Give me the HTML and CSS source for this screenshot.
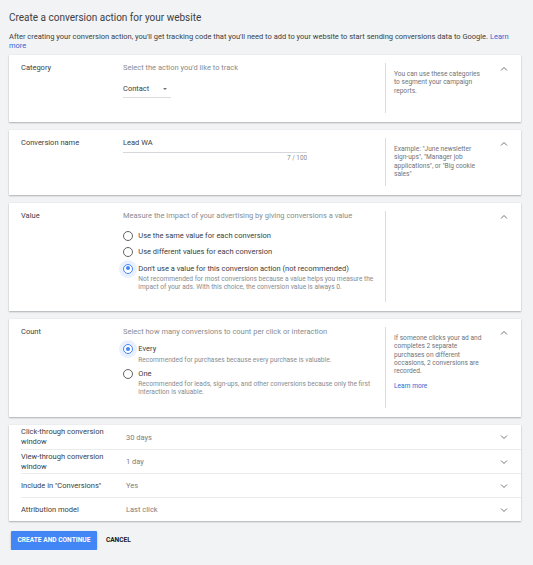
FILE: index.html
```html
<!DOCTYPE html>
<html lang="en">
<head>
    <meta charset="UTF-8">
    <meta name="viewport" content="width=device-width, initial-scale=1.0">
    <title>Create a conversion action</title>
    <link rel="stylesheet" href="styles.css">
</head>
<body>
    <div class="page">
        <h1 class="title">Create a conversion action for your website</h1>
        <p class="intro">After creating your conversion action, you'll get tracking code that you'll need to add to your website to start sending conversions data to Google. <a href="#">Learn more</a></p>

        <section class="card card-category">
            <div class="label">Category</div>
            <div class="main">
                <div class="hint">Select the action you'd like to track</div>
                <div class="select">Contact<span class="caret"></span></div>
            </div>
            <div class="aside">You can use these categories to segment your campaign reports.</div>
            <div class="toggle">
                <svg viewBox="0 0 8 8" width="8" height="8"><polyline points="1,5.5 4,2.5 7,5.5"/></svg>
            </div>
        </section>

        <section class="card card-name">
            <div class="label">Conversion name</div>
            <div class="main">
                <div class="field">
                    <div class="input">Lead WA</div>
                    <div class="counter">7 / 100</div>
                </div>
            </div>
            <div class="aside">Example: "June newsletter sign-ups", "Manager job applications", or "Big cookie sales"</div>
            <div class="toggle">
                <svg viewBox="0 0 8 8" width="8" height="8"><polyline points="1,5.5 4,2.5 7,5.5"/></svg>
            </div>
        </section>

        <section class="card card-value">
            <div class="label">Value</div>
            <div class="main">
                <div class="hint">Measure the impact of your advertising by giving conversions a value</div>
                <div class="options">
                    <div class="option">
                        <span class="radio"></span>
                        <div class="option-text"><div class="option-title">Use the same value for each conversion</div></div>
                    </div>
                    <div class="option">
                        <span class="radio"></span>
                        <div class="option-text"><div class="option-title">Use different values for each conversion</div></div>
                    </div>
                    <div class="option">
                        <span class="radio checked"></span>
                        <div class="option-text">
                            <div class="option-title">Don't use a value for this conversion action (not recommended)</div>
                            <div class="option-sub">Not recommended for most conversions because a value helps you measure the impact of your ads. With this choice, the conversion value is always 0.</div>
                        </div>
                    </div>
                </div>
            </div>
            <div class="aside"></div>
            <div class="toggle">
                <svg viewBox="0 0 8 8" width="8" height="8"><polyline points="1,5.5 4,2.5 7,5.5"/></svg>
            </div>
        </section>

        <section class="card card-count">
            <div class="label">Count</div>
            <div class="main">
                <div class="hint">Select how many conversions to count per click or interaction</div>
                <div class="options tight">
                    <div class="option">
                        <span class="radio checked"></span>
                        <div class="option-text">
                            <div class="option-title">Every</div>
                            <div class="option-sub">Recommended for purchases because every purchase is valuable.</div>
                        </div>
                    </div>
                    <div class="option">
                        <span class="radio"></span>
                        <div class="option-text">
                            <div class="option-title">One</div>
                            <div class="option-sub">Recommended for leads, sign-ups, and other conversions because only the first interaction is valuable.</div>
                        </div>
                    </div>
                </div>
            </div>
            <div class="aside">
                If someone clicks your ad and completes 2 separate purchases on different occasions, 2 conversions are recorded.
                <a class="aside-link" href="#">Learn more</a>
            </div>
            <div class="toggle">
                <svg viewBox="0 0 8 8" width="8" height="8"><polyline points="1,5.5 4,2.5 7,5.5"/></svg>
            </div>
        </section>

        <section class="card summary">
            <div class="row">
                <div class="row-label">Click-through conversion window</div>
                <div class="row-value">30 days</div>
                <div class="toggle"><svg viewBox="0 0 8 8" width="8" height="8"><polyline points="1,2.5 4,5.5 7,2.5"/></svg></div>
            </div>
            <div class="row">
                <div class="row-label">View-through conversion window</div>
                <div class="row-value">1 day</div>
                <div class="toggle"><svg viewBox="0 0 8 8" width="8" height="8"><polyline points="1,2.5 4,5.5 7,2.5"/></svg></div>
            </div>
            <div class="row">
                <div class="row-label">Include in "Conversions"</div>
                <div class="row-value">Yes</div>
                <div class="toggle"><svg viewBox="0 0 8 8" width="8" height="8"><polyline points="1,2.5 4,5.5 7,2.5"/></svg></div>
            </div>
            <div class="row">
                <div class="row-label">Attribution model</div>
                <div class="row-value">Last click</div>
                <div class="toggle"><svg viewBox="0 0 8 8" width="8" height="8"><polyline points="1,2.5 4,5.5 7,2.5"/></svg></div>
            </div>
        </section>

        <div class="actions">
            <button class="btn-primary">CREATE AND CONTINUE</button>
            <button class="btn-text">CANCEL</button>
        </div>
    </div>
</body>
</html>
```

FILE: styles.css
```css
body {
    margin: 0;
    padding: 0;
    background-color: #f1f3f4;
    font-family: Roboto, "Liberation Sans", Arial, sans-serif;
    color: #3c4043;
}
.page {
    width: 512px;
    padding: 12px 0 0 9px;
}
.title {
    margin: 0;
    font-size: 10px;
    line-height: 12px;
    font-weight: 400;
    color: #3c4043;
}
.intro {
    margin: 8px 0 5px;
    font-size: 7.5px;
    line-height: 9px;
    color: #3c4043;
}
a {
    color: #3367d6;
    text-decoration: none;
}

/* cards */
.card {
    display: flex;
    background-color: #ffffff;
    margin-bottom: 8px;
    padding: 8px 0 9px 12px;
    box-shadow: 0 1px 1.5px rgba(60, 64, 67, 0.35), 0 0 1px rgba(60, 64, 67, 0.12);
}
.label {
    width: 102px;
    flex-shrink: 0;
    font-size: 7.5px;
    line-height: 9px;
}
.main {
    width: 262px;
    flex-shrink: 0;
}
.hint {
    font-size: 7.5px;
    line-height: 9px;
    color: #888c90;
}
.aside {
    width: 101px;
    box-sizing: border-box;
    flex-shrink: 0;
    border-left: 1px solid #dadce0;
    padding: 7px 3px 0 8px;
    font-size: 6.6px;
    line-height: 8.3px;
    color: #6f7378;
}
.aside-link {
    display: block;
    margin-top: 7px;
}
.toggle {
    width: 35px;
    display: flex;
    justify-content: center;
    align-items: flex-start;
    padding-top: 2px;
}
.toggle svg polyline {
    fill: none;
    stroke: #6f7378;
    stroke-width: 1;
}
.card-category .aside { min-height: 50px; }
.card-name .aside { min-height: 48px; }
.card-value .aside { min-height: 91px; }
.card-count .aside { min-height: 81px; }

/* category dropdown */
.select {
    position: relative;
    width: 48px;
    margin-top: 12px;
    padding-bottom: 4px;
    border-bottom: 1px solid #dadce0;
    font-size: 7.5px;
    line-height: 9px;
}
.caret {
    position: absolute;
    right: 4px;
    top: 4px;
    border-left: 2.5px solid transparent;
    border-right: 2.5px solid transparent;
    border-top: 2.5px solid #6f7378;
}

/* name field */
.field {
    width: 184px;
}
.input {
    padding-bottom: 5px;
    border-bottom: 1px solid #d5d7da;
    font-size: 7.5px;
    line-height: 9px;
}
.counter {
    margin-top: 1.5px;
    text-align: right;
    font-size: 6.3px;
    line-height: 7px;
    color: #888c90;
}

/* radio groups */
.options {
    display: flex;
    flex-direction: column;
    gap: 6.3px;
    margin-top: 11px;
}
.options.tight {
    gap: 5.4px;
    margin-top: 8.3px;
}
.option {
    display: flex;
    align-items: flex-start;
}
.radio {
    width: 10px;
    height: 10px;
    box-sizing: border-box;
    flex-shrink: 0;
    margin-right: 5.3px;
    border: 1.2px solid #5f6368;
    border-radius: 50%;
    position: relative;
}
.radio.checked {
    border-color: #4285f4;
    box-shadow: 0 0 0 4px rgba(66, 133, 244, 0.12);
}
.radio.checked::after {
    content: "";
    position: absolute;
    left: 1.8px;
    top: 1.8px;
    width: 4px;
    height: 4px;
    border-radius: 50%;
    background-color: #4285f4;
}
.option-title {
    font-size: 7.5px;
    line-height: 10px;
    color: #3c4043;
}
.option-sub {
    margin-top: 1.3px;
    font-size: 6.6px;
    line-height: 8px;
    color: #888c90;
}

/* collapsed settings */
.summary {
    display: block;
    padding: 0 0 0 12px;
}
.row {
    display: flex;
    align-items: center;
    height: 24px;
    box-sizing: border-box;
    border-top: 1px solid #ebebeb;
}
.row:first-child {
    border-top: none;
}
.row-label {
    width: 101px;
    padding-right: 4px;
    flex-shrink: 0;
    font-size: 7.5px;
    line-height: 9.8px;
}
.row-value {
    flex: 1;
    font-size: 7.5px;
    color: #7a7e83;
}
.row .toggle {
    padding-top: 0;
    align-items: center;
}

/* buttons */
.actions {
    display: flex;
    align-items: center;
    margin-top: 10px;
    padding-left: 2px;
}
.btn-primary {
    height: 18.6px;
    padding: 0 6.5px;
    border: none;
    border-radius: 1px;
    background-color: #4285f4;
    color: #ffffff;
    font-family: Roboto, "Liberation Sans", Arial, sans-serif;
    font-size: 6.6px;
    font-weight: 700;
    box-shadow: 0 1px 2px rgba(0, 0, 0, 0.3);
}
.btn-text {
    margin-left: 4px;
    padding: 0 5px;
    border: none;
    background: none;
    color: #202124;
    font-family: Roboto, "Liberation Sans", Arial, sans-serif;
    font-size: 6.6px;
    font-weight: 700;
}
```
